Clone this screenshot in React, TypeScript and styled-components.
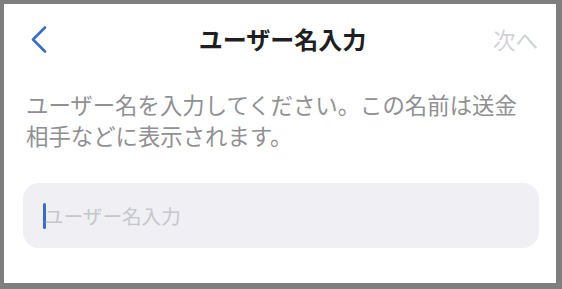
import React from "react";
import styled, { createGlobalStyle } from "styled-components";

const Global = createGlobalStyle`
  html, body { margin: 0; padding: 0; background: #7f7f7f; }
  body { width: 562px; height: 289px; overflow: hidden; }
  * { box-sizing: border-box; }
`;

const Frame = styled.div`
  margin: 4px 6px 6px 4px;
  height: 279px;
  background: #ffffff;
  display: flex;
  flex-direction: column;
  font-family: "Noto Sans CJK JP", "Noto Sans", sans-serif;
`;

const Header = styled.header`
  height: 70px;
  display: grid;
  grid-template-columns: 1fr auto 1fr;
  align-items: center;
  padding: 0 18px 0 23px;
`;

const BackButton = styled.button`
  justify-self: start;
  background: none;
  border: none;
  padding: 0 0 0 3px;
  display: flex;
  align-items: center;
  cursor: pointer;
`;

const Title = styled.h1`
  margin: 0;
  font-size: 24px;
  font-weight: 700;
  color: #1f1f21;
  line-height: 1;
`;

const NextButton = styled.span`
  justify-self: end;
  font-size: 22.5px;
  font-weight: 400;
  color: #d2d2d6;
  line-height: 1;
`;

const Description = styled.p`
  margin: 15px 0 0;
  padding: 0 18px 0 22px;
  font-size: 22.4px;
  line-height: 31px;
  color: #909094;
`;

const InputBox = styled.div`
  margin: 32px 17px 0 19px;
  height: 65px;
  border-radius: 16px;
  background: #efeff4;
  display: flex;
  align-items: center;
  padding-left: 20px;
`;

const Caret = styled.span`
  width: 3px;
  height: 26px;
  border-radius: 1.5px;
  background: #3a6bc6;
`;

const Placeholder = styled.span`
  margin-left: -2px;
  font-size: 19.6px;
  color: #c6c6cb;
  line-height: 1;
`;

export default function App() {
  return (
    <>
      <Global />
      <Frame>
        <Header>
          <BackButton aria-label="戻る">
            <svg width="17" height="29" viewBox="0 0 17 29" fill="none">
              <polyline
                points="15,2.5 3,14.5 15,26.5"
                stroke="#3a6bc6"
                strokeWidth="2.6"
                strokeLinecap="round"
                strokeLinejoin="round"
              />
            </svg>
          </BackButton>
          <Title>ユーザー名入力</Title>
          <NextButton>次へ</NextButton>
        </Header>
        <Description>
          ユーザー名を入力してください。この名前は送金相手などに表示されます。
        </Description>
        <InputBox>
          <Caret />
          <Placeholder>ユーザー名入力</Placeholder>
        </InputBox>
      </Frame>
    </>
  );
}
